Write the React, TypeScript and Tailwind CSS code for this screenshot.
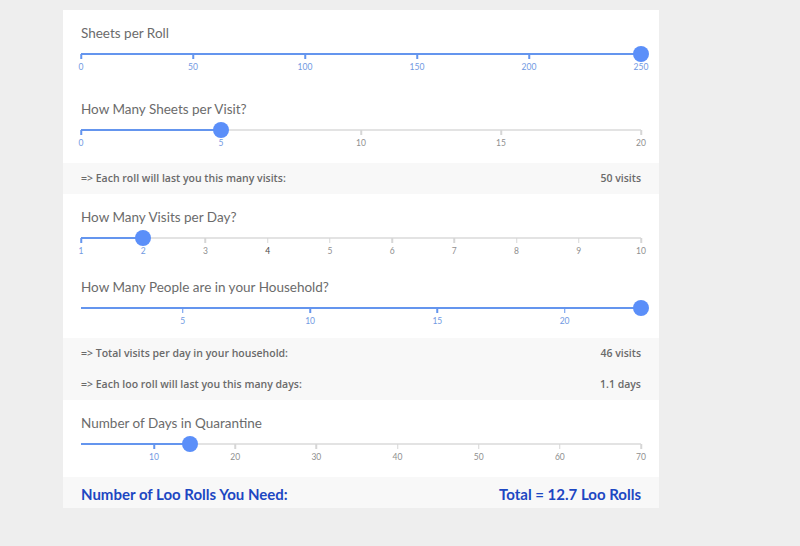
import React from 'react'

type Slider = {
  title: string
  min: number
  max: number
  value: number
  marks: number[]
  pb: string
}

const sliders: Slider[] = [
  { title: 'Sheets per Roll', min: 0, max: 250, value: 250, marks: [0, 50, 100, 150, 200, 250], pb: 'pb-[14px]' },
  { title: 'How Many Sheets per Visit?', min: 0, max: 20, value: 5, marks: [0, 5, 10, 15, 20], pb: 'pb-[15px]' },
  { title: 'How Many Visits per Day?', min: 1, max: 10, value: 2, marks: [1, 2, 3, 4, 5, 6, 7, 8, 9, 10], pb: 'pb-[8px]' },
  { title: 'How Many People are in your Household?', min: 1, max: 23, value: 23, marks: [5, 10, 15, 20], pb: 'pb-[12px]' },
  { title: 'Number of Days in Quarantine', min: 1, max: 70, value: 14.4, marks: [10, 20, 30, 40, 50, 60, 70], pb: 'pb-[15px]' },
]

function SliderBlock({ s }: { s: Slider }) {
  const pct = (v: number) => ((v - s.min) / (s.max - s.min)) * 100
  const fill = pct(s.value)
  return (
    <div className={`pt-[15px] px-[18px] ${s.pb}`}>
      <div className="h-4 leading-4 text-[13.5px] text-[#6b6b6b] font-normal">{s.title}</div>
      <div className="relative mt-[5px] h-4">
        <div className="absolute left-0 right-0 top-[7px] h-[2px] bg-[#e3e3e3]" />
        <div className="absolute left-0 top-[7px] h-[2px] bg-[#6495ee]" style={{ width: `${fill}%` }} />
        {s.marks.map((m) => (
          <div
            key={m}
            className={`absolute top-[8px] h-[5px] w-[1.5px] -translate-x-1/2 ${m <= s.value ? 'bg-[#6495ee]' : 'bg-[#d6d6d6]'}`}
            style={{ left: `${pct(m)}%` }}
          />
        ))}
        <div
          className="absolute top-0 h-4 w-4 -translate-x-1/2 rounded-full bg-[#5b8ff9]"
          style={{ left: `${fill}%` }}
        />
      </div>
      <div className="relative h-[10px]">
        {s.marks.map((m) => (
          <span
            key={m}
            className={`absolute top-0 -translate-x-1/2 text-[8.5px] leading-[10px] ${
              m <= s.value ? 'text-[#7199e2]' : m === 4 ? 'text-[#444]' : 'text-[#8f8f8f]'
            }`}
            style={{ left: `${pct(m)}%` }}
          >
            {m}
          </span>
        ))}
      </div>
    </div>
  )
}

function ResultRow({ label, value }: { label: string; value: string }) {
  return (
    <div className="flex h-[31px] items-center justify-between px-[18px] font-['Open_Sans',sans-serif] text-[10.5px] font-semibold text-[#6a6a6a]">
      <span>{label}</span>
      <span>{value}</span>
    </div>
  )
}

export default function App() {
  return (
    <div className="min-h-[546px] bg-[#eeeeee] pt-[10px] font-['Lato','Open_Sans',sans-serif]">
      <div className="ml-[63px] w-[596px] bg-white">
        <SliderBlock s={sliders[0]} />
        <SliderBlock s={sliders[1]} />
        <div className="bg-[#f8f8f8]">
          <ResultRow label="=> Each roll will last you this many visits:" value="50 visits" />
        </div>
        <SliderBlock s={sliders[2]} />
        <SliderBlock s={sliders[3]} />
        <div className="bg-[#f8f8f8]">
          <ResultRow label="=> Total visits per day in your household:" value="46 visits" />
          <ResultRow label="=> Each loo roll will last you this many days:" value="1.1 days" />
        </div>
        <SliderBlock s={sliders[4]} />
        <div className="flex h-[31px] items-center justify-between bg-[#f8f8f8] px-[18px] pt-[4px] text-[15px] font-bold text-[#1d47c2]">
          <span>Number of Loo Rolls You Need:</span>
          <span>Total = 12.7 Loo Rolls</span>
        </div>
      </div>
    </div>
  )
}
